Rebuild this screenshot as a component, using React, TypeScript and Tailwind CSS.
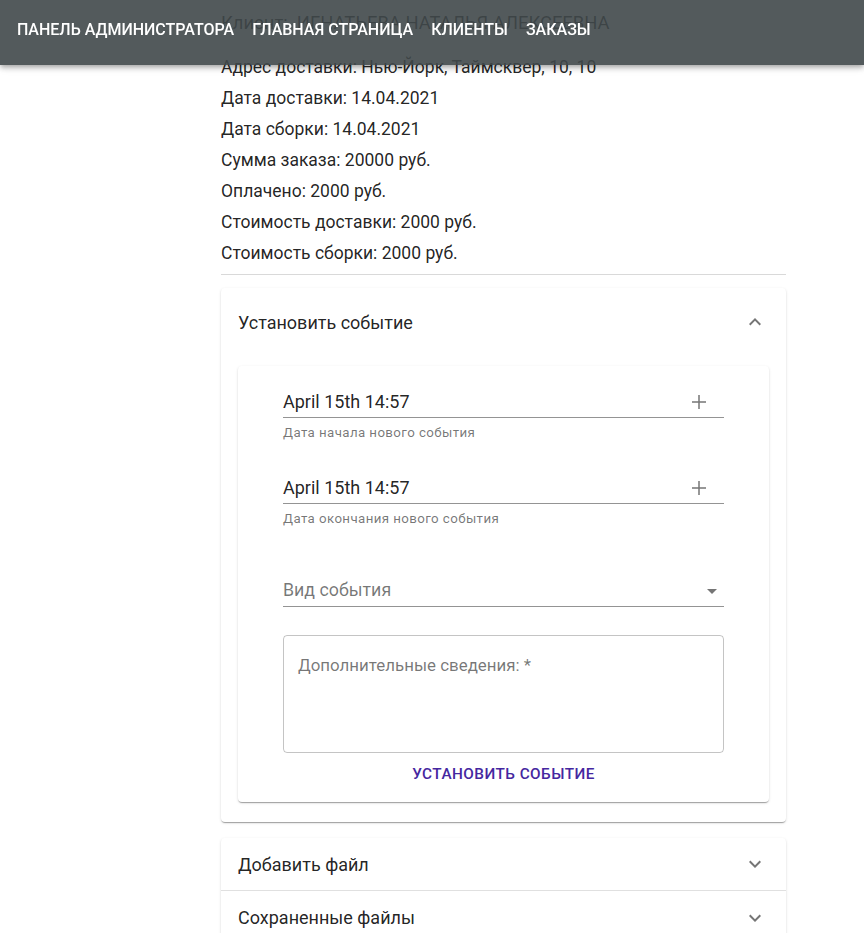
import React from "react";

const ExpandIcon = ({ up = false }: { up?: boolean }) => (
  <svg viewBox="0 0 24 24" className={"h-6 w-6 fill-[rgba(0,0,0,0.54)] " + (up ? "rotate-180" : "")}>
    <path d="M16.59 8.59 12 13.17 7.41 8.59 6 10l6 6 6-6z" />
  </svg>
);

const AddIcon = () => (
  <svg viewBox="0 0 24 24" className="h-6 w-6 fill-[rgba(0,0,0,0.54)]">
    <path d="M19 12.75h-6.25V19h-1.5v-6.25H5v-1.5h6.25V5h1.5v6.25H19z" />
  </svg>
);

function DateField({ value, helper }: { value: string; helper: string }) {
  return (
    <div>
      <div className="flex h-[32px] items-center justify-between border-b border-[rgba(0,0,0,0.42)]">
        <span className="text-[18px] text-[rgba(0,0,0,0.87)]">{value}</span>
        <span className="mr-[13px]">
          <AddIcon />
        </span>
      </div>
      <div className="mt-[7px] text-[13.3px] leading-4 tracking-[0.03em] text-[rgba(0,0,0,0.54)]">{helper}</div>
    </div>
  );
}

const info = [
  "Адрес доставки: Нью-Йорк, Таймсквер, 10, 10",
  "Дата доставки: 14.04.2021",
  "Дата сборки: 14.04.2021",
  "Сумма заказа: 20000 руб.",
  "Оплачено: 2000 руб.",
  "Стоимость доставки: 2000 руб.",
  "Стоимость сборки: 2000 руб.",
];

export default function App() {
  return (
    <div className="relative min-h-[933px] overflow-hidden bg-white font-['Roboto',sans-serif] text-[rgba(0,0,0,0.87)]">
      <header className="fixed inset-x-0 top-0 z-10 flex h-[65px] gap-[18px] bg-[rgba(64,72,74,0.9)] pl-[17px] pt-[18px] shadow-[0_2px_4px_-1px_rgba(0,0,0,0.2),0_4px_5px_0_rgba(0,0,0,0.14),0_1px_10px_0_rgba(0,0,0,0.12)]">
        {["ПАНЕЛЬ АДМИНИСТРАТОРА", "ГЛАВНАЯ СТРАНИЦА", "КЛИЕНТЫ", "ЗАКАЗЫ"].map((t) => (
          <span key={t} className="text-base font-medium leading-6 text-white">
            {t}
          </span>
        ))}
      </header>

      <main className="ml-[221px] w-[565px] pt-[9px]">
        <div className="mb-[15px] text-[18.4px] leading-7">Клиент:&nbsp; ИГНАТЬЕВА НАТАЛЬЯ АЛЕКСЕЕВНА</div>
        {info.map((l) => (
          <div key={l} className="text-[17.5px] leading-[31px]">
            {l}
          </div>
        ))}
        <div className="mt-[5px] h-px bg-[#d9d9d9]" />

        <section className="mt-[13px] rounded bg-white pb-[20px] shadow-[0_2px_1px_-1px_rgba(0,0,0,0.2),0_1px_1px_0_rgba(0,0,0,0.14),0_1px_3px_0_rgba(0,0,0,0.12)]">
          <div className="flex h-[68px] items-center justify-between pl-[17px] pr-[19px]">
            <span className="text-[18px]">Установить событие</span>
            <ExpandIcon up />
          </div>
          <div className="px-[17px] pt-[10px]">
            <div className="rounded bg-white px-[45px] pb-[10px] pt-[20px] shadow-[0_2px_1px_-1px_rgba(0,0,0,0.2),0_1px_1px_0_rgba(0,0,0,0.14),0_1px_3px_0_rgba(0,0,0,0.12)]">
              <DateField value="April 15th 14:57" helper="Дата начала нового события" />
              <div className="h-[31px]" />
              <DateField value="April 15th 14:57" helper="Дата окончания нового события" />
              <div className="mt-[48px] flex h-[32px] items-center justify-between border-b border-[rgba(0,0,0,0.42)]">
                <span className="text-[17.8px] text-[rgba(0,0,0,0.54)]">Вид события</span>
                <svg viewBox="0 0 24 24" className="h-6 w-6 fill-[rgba(0,0,0,0.54)]">
                  <path d="M7 10l5 5 5-5z" />
                </svg>
              </div>
              <div className="mt-[28px] h-[118px] rounded border border-[rgba(0,0,0,0.23)] px-[14px] pt-[17px] text-[16.9px] leading-6 text-[rgba(0,0,0,0.54)]">
                Дополнительные сведения: *
              </div>
              <div className="mt-[3px] flex h-[36px] items-center justify-center">
                <span className="text-[15.3px] font-medium tracking-[0.03em] text-[#4527a0]">УСТАНОВИТЬ СОБЫТИЕ</span>
              </div>
            </div>
          </div>
        </section>

        <section className="mt-[16px] rounded bg-white shadow-[0_2px_1px_-1px_rgba(0,0,0,0.2),0_1px_1px_0_rgba(0,0,0,0.14),0_1px_3px_0_rgba(0,0,0,0.12)]">
          <div className="flex h-[52px] items-center justify-between pl-[17px] pr-[19px]">
            <span className="text-[18px]">Добавить файл</span>
            <ExpandIcon />
          </div>
          <div className="h-px bg-[rgba(0,0,0,0.12)]" />
          <div className="flex h-[53px] items-center justify-between pl-[17px] pr-[19px]">
            <span className="text-[18px]">Сохраненные файлы</span>
            <ExpandIcon />
          </div>
        </section>
      </main>
    </div>
  );
}
